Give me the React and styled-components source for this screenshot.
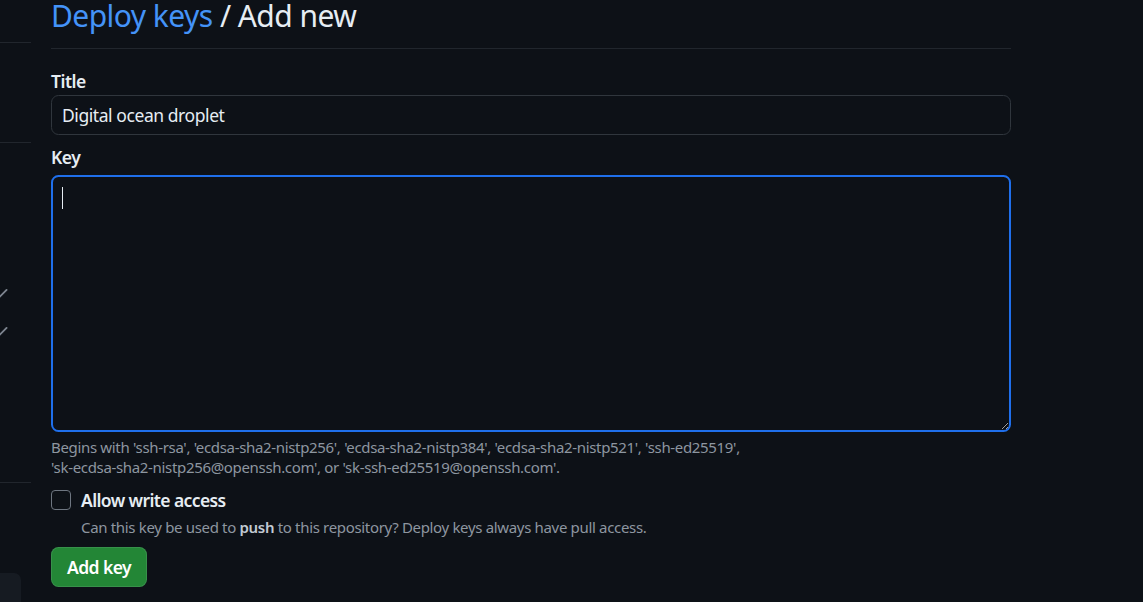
import React from 'react'
import styled, { createGlobalStyle } from 'styled-components'

const GlobalStyle = createGlobalStyle`
  html, body {
    margin: 0;
    padding: 0;
    background: #0d1117;
    overflow: hidden;
  }
  body {
    font-family: "Noto Sans", "Liberation Sans", sans-serif;
    color: #e6edf3;
  }
  * { box-sizing: border-box; }
`;

const Page = styled.div`
  display: flex;
  align-items: flex-start;
  width: 1143px;
  height: 602px;
  background: #0d1117;
`;

const Sidebar = styled.aside`
  width: 31px;
  height: 602px;
  flex-shrink: 0;
  display: flex;
  flex-direction: column;
  overflow: hidden;

  & > * { flex-shrink: 0; }
`;

const Gap = styled.div`
  height: ${(p) => p.h}px;
`;

const Rule = styled.div`
  height: 1px;
  background: #21262d;
`;

const CheckRow = styled.div`
  height: 38px;
  display: flex;
  align-items: center;
  margin-left: -10px;
  color: #7d8590;
`;

const StubBox = styled.div`
  width: 21px;
  height: 40px;
  background: #161b22;
  border-top-right-radius: 7px;
`;

const Main = styled.main`
  width: 960px;
  margin-left: 20px;
`;

const Subhead = styled.div`
  border-bottom: 1px solid #21262d;
  padding-bottom: 16px;
`;

const Heading = styled.h2`
  margin: 0;
  font-size: 30px;
  font-weight: 400;
  line-height: 32px;
  letter-spacing: -0.55px;
  color: #e6edf3;

  a {
    color: #4493f8;
    text-decoration: none;
  }
`;

const Field = styled.div`
  margin-top: ${(p) => p.top}px;
`;

const Label = styled.label`
  display: block;
  font-size: 17.5px;
  font-weight: 600;
  line-height: 26px;
  letter-spacing: -0.5px;
  margin-bottom: ${(p) => p.gap}px;
  color: #e6edf3;
`;

const TextInput = styled.input`
  display: block;
  width: 100%;
  height: 40px;
  padding: 0 10px;
  font: inherit;
  font-size: 17.5px;
  letter-spacing: -0.43px;
  color: #e6edf3;
  background: #0d1117;
  border: 1px solid #30363d;
  border-radius: 7.5px;
  outline: none;
`;

const AreaWrap = styled.div`
  position: relative;
`;

const KeyArea = styled.textarea`
  display: block;
  width: 100%;
  height: 257px;
  padding: 10px;
  font: inherit;
  font-size: 17.5px;
  color: #e6edf3;
  background: #0d1117;
  border: 2px solid #1f6feb;
  border-radius: 7.5px;
  outline: none;
  resize: vertical;
`;

const Caret = styled.span`
  position: absolute;
  left: 11px;
  top: 12px;
  width: 1px;
  height: 22px;
  background: #e6edf3;
`;

const Note = styled.p`
  margin: ${(p) => p.m || '0'};
  font-size: 15px;
  line-height: 20px;
  letter-spacing: -0.33px;
  color: #8d96a0;

  strong {
    color: #c2cad3;
    font-weight: 600;
  }
`;

const CheckLine = styled.div`
  margin-top: 13px;
  display: flex;
  align-items: center;
  gap: 10px;
`;

const Box = styled.span`
  width: 20px;
  height: 20px;
  border: 1px solid #6e7681;
  border-radius: 4px;
  flex-shrink: 0;
`;

const CheckLabel = styled.span`
  font-size: 17.5px;
  font-weight: 600;
  line-height: 20px;
  letter-spacing: -0.6px;
`;

const Button = styled.button`
  display: block;
  margin-top: 10px;
  height: 40px;
  padding: 0 15px;
  font: inherit;
  font-size: 17.5px;
  font-weight: 600;
  letter-spacing: -0.55px;
  color: #ffffff;
  background: #238636;
  border: 1px solid rgba(240, 246, 252, 0.1);
  border-radius: 7.5px;
  cursor: pointer;
`;

const Check = () => (
  <svg width="20" height="20" viewBox="0 0 16 16" fill="currentColor">
    <path d="M13.78 4.22a.75.75 0 0 1 0 1.06l-7.25 7.25a.75.75 0 0 1-1.06 0L2.22 9.28a.751.751 0 0 1 .018-1.042.751.751 0 0 1 1.042-.018L6 10.94l6.72-6.72a.75.75 0 0 1 1.06 0Z" />
  </svg>
);

const App = () => {
  return (
    <Page>
      <GlobalStyle />
      <Sidebar>
        <Gap h={42} />
        <Rule />
        <Gap h={99} />
        <Rule />
        <Gap h={132} />
        <CheckRow><Check /></CheckRow>
        <CheckRow><Check /></CheckRow>
        <Gap h={131} />
        <Rule />
        <Gap h={90} />
        <StubBox />
      </Sidebar>

      <Main>
        <Subhead>
          <Heading>
            <a href="#">Deploy keys</a> / Add new
          </Heading>
        </Subhead>

        <Field top={19}>
          <Label gap={1}>Title</Label>
          <TextInput defaultValue="Digital ocean droplet" />
        </Field>

        <Field top={9}>
          <Label gap={5}>Key</Label>
          <AreaWrap>
            <KeyArea readOnly />
            <Caret />
          </AreaWrap>
          <Note m="5px 0 0">
            Begins with 'ssh-rsa', 'ecdsa-sha2-nistp256', 'ecdsa-sha2-nistp384', 'ecdsa-sha2-nistp521', 'ssh-ed25519',
            <br />
            'sk-ecdsa-sha2-nistp256@openssh.com', or 'sk-ssh-ed25519@openssh.com'.
          </Note>
        </Field>

        <CheckLine>
          <Box />
          <CheckLabel>Allow write access</CheckLabel>
        </CheckLine>
        <Note m="7px 0 0 30px">
          Can this key be used to <strong>push</strong> to this repository? Deploy keys always have pull access.
        </Note>

        <Button type="button">Add key</Button>
      </Main>
    </Page>
  )
}

export default App
